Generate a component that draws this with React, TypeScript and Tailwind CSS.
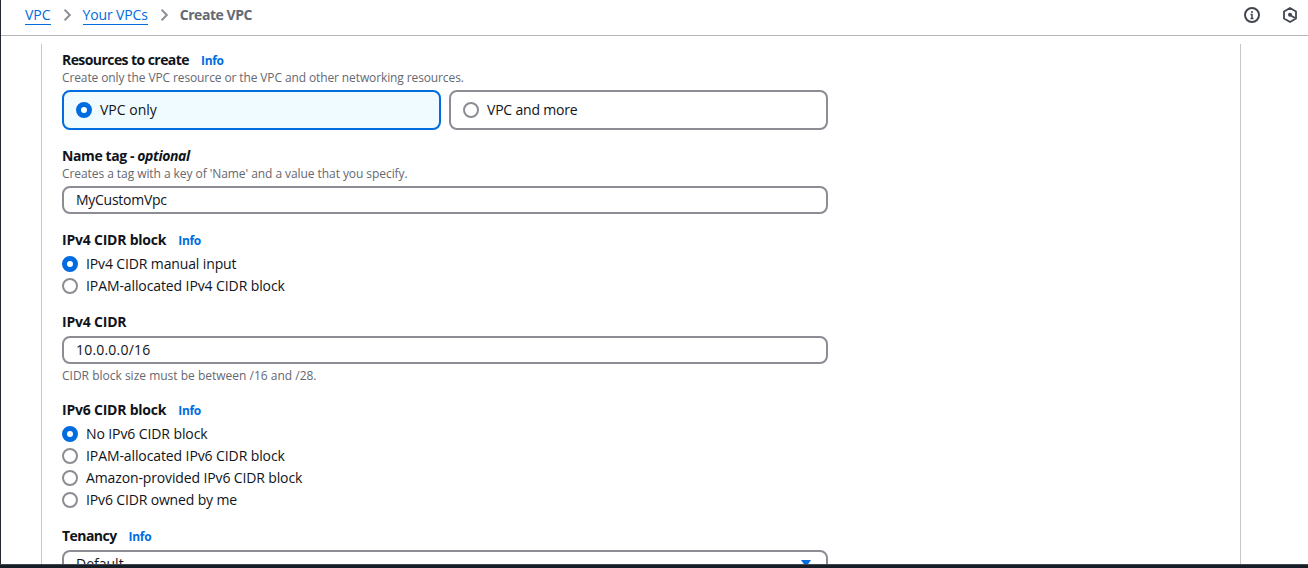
import React from "react";

function Label({ children, info, className = "" }: { children: React.ReactNode; info?: boolean; className?: string }) {
  return (
    <div className="flex h-5 items-center gap-3 leading-5 font-bold whitespace-nowrap">
      <span className={className}>{children}</span>
      {info && <a className="pt-px text-xs leading-5 font-bold tracking-[-0.3px] text-[#006ce0]">Info</a>}
    </div>
  );
}

function Hint({ children, className = "" }: { children: React.ReactNode; className?: string }) {
  return <p className={`h-4 text-xs leading-4 whitespace-nowrap text-[#656871] ${className}`}>{children}</p>;
}

function RadioDot({ checked }: { checked?: boolean }) {
  return checked ? (
    <span className="size-4 shrink-0 rounded-full border-5 border-[#006ce0] bg-white" />
  ) : (
    <span className="size-4 shrink-0 rounded-full border-2 border-[#8c8c94] bg-white" />
  );
}

function Radio({ children, checked, className = "tracking-[-0.1px]" }: { children: string; checked?: boolean; className?: string }) {
  return (
    <div className="flex h-5 items-center gap-2 whitespace-nowrap">
      <RadioDot checked={checked} />
      <span className={className}>{children}</span>
    </div>
  );
}

function Input({ value, className = "" }: { value: string; className?: string }) {
  return (
    <div className={`mt-1 flex h-7 items-center rounded-lg border-2 border-[#8c8c94] bg-white px-3 ${className}`}>
      {value}
    </div>
  );
}

function Chevron() {
  return (
    <svg className="size-4 shrink-0" viewBox="0 0 16 16" fill="none" stroke="#8c8c94" strokeWidth="2">
      <path d="m5.6 2.6 5.2 5.4-5.2 5.4" />
    </svg>
  );
}

export default function App() {
  return (
    <div className="flex h-[568px] w-[1308px] flex-col overflow-hidden bg-white font-['Open_Sans',sans-serif] text-sm leading-5 text-[#0f141a]">
      <div className="flex min-h-0 flex-1 flex-col overflow-hidden border-l border-[#23272f]">
        <header className="flex h-9 shrink-0 items-center justify-between border-b border-[#b4b4bb] pr-2.5 pb-[5px] pl-6">
          <nav className="flex items-center whitespace-nowrap">
            <a className="border-b border-[#006ce0] leading-[18px] text-[#006ce0]">VPC</a>
            <span className="mx-2 flex"><Chevron /></span>
            <a className="border-b border-[#006ce0] leading-[18px] tracking-[-0.15px] text-[#006ce0]">Your VPCs</a>
            <span className="mx-2 flex"><Chevron /></span>
            <span className="font-bold tracking-[-0.45px] text-[#656871]">Create VPC</span>
          </nav>
          <div className="flex gap-[22px]">
            <svg className="size-4" viewBox="0 0 16 16" fill="none" stroke="#424650" strokeWidth="2">
              <circle cx="8" cy="8" r="7" />
              <path d="M8 4v2M6.5 7.5H8V12M6.5 11.5h3" strokeWidth="1.5" />
            </svg>
            <svg className="size-4" viewBox="0 0 16 16" fill="none" stroke="#424650" strokeWidth="1.8">
              <path d="m8 1 6 3.5v7L8 15l-6-3.5v-7z" strokeLinejoin="round" />
              <circle cx="8" cy="7.8" r="2" fill="#424650" stroke="none" />
              <path d="m8 8 5 3" />
            </svg>
          </div>
        </header>
        <main className="mt-2 mr-[67px] ml-10 flex min-h-0 flex-1 flex-col overflow-hidden border-x border-[#c6c6cd] pt-1.5 pl-5">
          <form className="flex w-[766px] shrink-0 flex-col gap-4">
            <section>
              <Label info className="tracking-[-0.57px]">Resources to create</Label>
              <Hint className="tracking-[-0.115px]">Create only the VPC resource or the VPC and other networking resources.</Hint>
              <div className="mt-1 grid grid-cols-2 gap-2">
                <div className="flex h-10 items-center rounded-lg border-2 border-[#006ce0] bg-[#f0fbff] px-3">
                  <Radio checked className="">VPC only</Radio>
                </div>
                <div className="flex h-10 items-center rounded-lg border-2 border-[#8c8c94] px-3">
                  <Radio className="tracking-[-0.2px]">VPC and more</Radio>
                </div>
              </div>
            </section>
            <section>
              <Label className="tracking-[-0.4px]">Name tag - <i>optional</i></Label>
              <Hint className="tracking-[-0.065px]">Creates a tag with a key of 'Name' and a value that you specify.</Hint>
              <Input value="MyCustomVpc" className="tracking-[-0.27px]" />
            </section>
            <section>
              <Label info className="tracking-[-0.22px]">IPv4 CIDR block</Label>
              <div className="mt-1 flex flex-col gap-0.5">
                <Radio checked className="tracking-[-0.13px]">IPv4 CIDR manual input</Radio>
                <Radio>IPAM-allocated IPv4 CIDR block</Radio>
              </div>
            </section>
            <section>
              <Label className="tracking-[-0.2px]">IPv4 CIDR</Label>
              <Input value="10.0.0.0/16" className="tracking-[0.2px]" />
              <div className="mt-1">
                <Hint>CIDR block size must be between /16 and /28.</Hint>
              </div>
            </section>
            <section>
              <Label info className="tracking-[-0.22px]">IPv6 CIDR block</Label>
              <div className="mt-1 flex flex-col gap-0.5">
                <Radio checked>No IPv6 CIDR block</Radio>
                <Radio>IPAM-allocated IPv6 CIDR block</Radio>
                <Radio className="tracking-[-0.13px]">Amazon-provided IPv6 CIDR block</Radio>
                <Radio className="tracking-[-0.15px]">IPv6 CIDR owned by me</Radio>
              </div>
            </section>
            <section>
              <Label info className="tracking-[-0.55px]">Tenancy</Label>
              <div className="mt-1 flex h-7 items-center justify-between rounded-lg border-2 border-[#8c8c94] pr-3 pl-3">
                <span>Default</span>
                <svg className="size-4" viewBox="0 0 16 16" fill="#006ce0">
                  <path d="M3 4h10l-5 7z" />
                </svg>
              </div>
            </section>
          </form>
        </main>
      </div>
      <footer className="h-1 shrink-0 border-t border-[#424650] bg-[#161d26]" />
    </div>
  );
}
